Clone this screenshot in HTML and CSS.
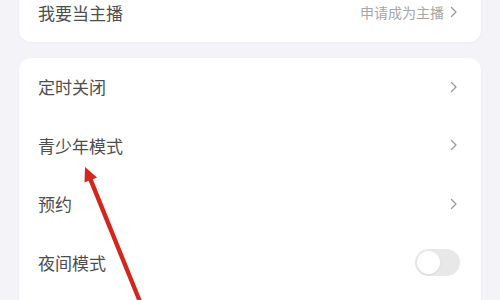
FILE: index.html
```html
<!DOCTYPE html>
<html lang="zh">
<head>
<meta charset="utf-8">
<link rel="stylesheet" href="styles.css">
</head>
<body>
<div class="page">
  <div class="card card-top">
    <div class="row">
      <span class="label">我要当主播</span>
      <span class="extra">申请成为主播<svg class="chev" viewBox="0 0 8 12"><polyline points="1.5,1.5 6,6 1.5,10.5"/></svg></span>
    </div>
  </div>
  <div class="card card-main">
    <div class="row">
      <span class="label">定时关闭</span>
      <svg class="chev" viewBox="0 0 8 12"><polyline points="1.5,1.5 6,6 1.5,10.5"/></svg>
    </div>
    <div class="row">
      <span class="label">青少年模式</span>
      <svg class="chev" viewBox="0 0 8 12"><polyline points="1.5,1.5 6,6 1.5,10.5"/></svg>
    </div>
    <div class="row">
      <span class="label">预约</span>
      <svg class="chev" viewBox="0 0 8 12"><polyline points="1.5,1.5 6,6 1.5,10.5"/></svg>
    </div>
    <div class="row">
      <span class="label">夜间模式</span>
      <span class="toggle"><span class="knob"></span></span>
    </div>
  </div>
</div>
<svg class="arrow" viewBox="0 0 500 300" width="500" height="300">
  <polygon points="85,167 97,177.5 92.8,179.2 142,301 138,302.5 88.6,180.8 84.5,182.5" fill="#d3261d"/>
</svg>
</body>
</html>
```
FILE: styles.css
```css
html, body {
  margin: 0;
  padding: 0;
}
body {
  background: #f3f3f8;
  width: 500px;
  height: 300px;
  overflow: hidden;
  position: relative;
  font-family: "Noto Sans CJK SC", "Noto Sans", sans-serif;
}
.page {
  padding: 0 19px;
  display: flex;
  flex-direction: column;
  gap: 16px;
}
.card {
  background: #ffffff;
  border-radius: 12px;
  padding: 0 23px 0 19px;
  box-shadow: 0 1px 3px rgba(120, 120, 150, 0.06);
}
.card-top {
  margin-top: -17px;
}
.card-main {
  padding-bottom: 30px;
}
.row {
  height: 58.5px;
  display: flex;
  align-items: center;
  justify-content: space-between;
}
.label {
  font-size: 17px;
  color: #4d4d4d;
  letter-spacing: 0;
}
.extra {
  display: flex;
  align-items: center;
  gap: 6px;
  font-size: 14px;
  color: #a6a6a6;
}
.chev {
  width: 8px;
  height: 12px;
  fill: none;
  stroke: #9a9a9a;
  stroke-width: 1.3;
  stroke-linecap: round;
  stroke-linejoin: round;
}
.toggle {
  width: 45px;
  height: 27px;
  border-radius: 14px;
  background: #e8e8e8;
  display: flex;
  align-items: center;
  padding: 0 2px;
  box-sizing: border-box;
  margin-right: -2px;
}
.knob {
  width: 23px;
  height: 23px;
  border-radius: 50%;
  background: #ffffff;
  box-shadow: 0 1px 2px rgba(0, 0, 0, 0.08);
}
.arrow {
  position: absolute;
  left: 0;
  top: 0;
}
```
